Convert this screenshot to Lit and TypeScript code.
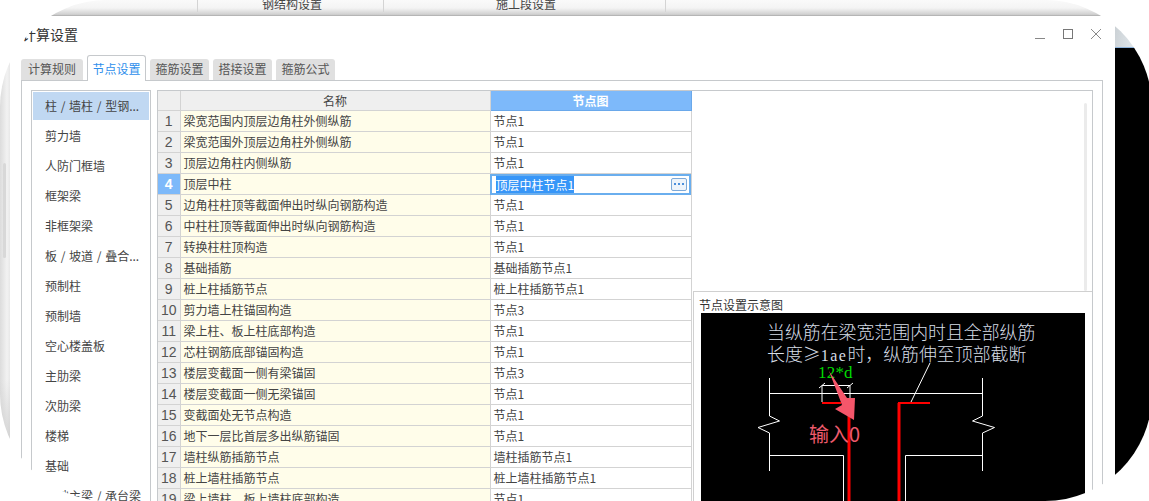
import { LitElement, html, css, svg } from "lit";
import { customElement } from "lit/decorators.js";

const menu = ["柱 / 墙柱 / 型钢...", "剪力墙", "人防门框墙", "框架梁", "非框架梁", "板 / 坡道 / 叠合...", "预制柱", "预制墙", "空心楼盖板", "主肋梁", "次肋梁", "楼梯", "基础", "基础主梁 / 承台梁"];
const rows: [string, string][] = [
  ["梁宽范围内顶层边角柱外侧纵筋", "节点1"],
  ["梁宽范围外顶层边角柱外侧纵筋", "节点1"],
  ["顶层边角柱内侧纵筋", "节点1"],
  ["顶层中柱", "顶层中柱节点1"],
  ["边角柱柱顶等截面伸出时纵向钢筋构造", "节点1"],
  ["中柱柱顶等截面伸出时纵向钢筋构造", "节点1"],
  ["转换柱柱顶构造", "节点1"],
  ["基础插筋", "基础插筋节点1"],
  ["桩上柱插筋节点", "桩上柱插筋节点1"],
  ["剪力墙上柱锚固构造", "节点3"],
  ["梁上柱、板上柱底部构造", "节点1"],
  ["芯柱钢筋底部锚固构造", "节点1"],
  ["楼层变截面一侧有梁锚固", "节点3"],
  ["楼层变截面一侧无梁锚固", "节点1"],
  ["变截面处无节点构造", "节点1"],
  ["地下一层比首层多出纵筋锚固", "节点1"],
  ["墙柱纵筋插筋节点", "墙柱插筋节点1"],
  ["桩上墙柱插筋节点", "桩上墙柱插筋节点1"],
  ["梁上墙柱、板上墙柱底部构造", "节点1"],
];
const tabs = ["计算规则", "节点设置", "箍筋设置", "搭接设置", "箍筋公式"];

@customElement("app-root")
export class AppRoot extends LitElement {
  static styles = css`
    :host { display: block; width: 1149px; height: 501px; font-family: "Noto Sans CJK SC", "Noto Sans", sans-serif; font-size: 12px; color: #333; }
    .stage { position: relative; width: 1149px; height: 501px; overflow: hidden; background: #fff; display: grid; grid-template-columns: 10px 1105px 1fr; grid-template-rows: 16px 1fr; }
    .topbar { grid-column: 1 / 4; display: grid; grid-template-columns: 198px 186px 282px 1fr; background: linear-gradient(#fafafa, #f4f4f4 50%, #d0d0d0 90%, #a9a9a9); height: 16px; overflow: hidden; }
    .topcell { border-right: 1px solid #d4d4d4; height: 12px; text-align: center; line-height: 12px; color: #444; }
    .topcell span { display: block; margin-top: -2px; padding-left: 3px; font-size: 12px; }
    .leftbg { background: linear-gradient(transparent 75%, #cfcfcf 90%), linear-gradient(90deg, #dcdcdc, #f2f2f2 70%, #e8e8e8); padding: 147px 0 0 3px; box-sizing: border-box; }
    .sb { width: 3px; height: 95px; border-radius: 2px; background: #d8d8d8; }
    .rightbg { display: flex; flex-direction: column; }
    .rightbg .g { height: 31px; background: linear-gradient(100deg, #c9cfd3, #e4eaee 70%); border-bottom: 1px solid #8fb4dc; }
    .rightbg .k { flex: 1; background: #000; }
    .dialog { background: #fff; display: flex; flex-direction: column; min-height: 0; overflow: hidden; }
    .head { height: 39px; flex: none; display: flex; align-items: flex-start; padding: 9px 14px 0 12px; box-sizing: border-box; font-size: 14px; color: #333; line-height: 18px; }
    .title { flex: 1; }
    .ctl { display: flex; gap: 18px; padding-top: 4px; }
    .ctl svg { display: block; width: 10px; height: 11px; }
    .tabs { height: 26px; flex: none; display: flex; gap: 4px; align-items: flex-end; padding-left: 11px; margin-bottom: -1px; position: relative; z-index: 1; }
    .tab { width: 59px; height: 21px; margin-bottom: 1px; background: #e0e0e0; border-radius: 3px 3px 0 0; text-align: center; line-height: 20px; color: #555; font-size: 12px; box-sizing: border-box; }
    .tab:first-child { width: 62px; }
    .tab.on { height: 26px; margin-bottom: 0; background: #fff; color: #2f8fec; border: 1px solid #c6c9cc; border-bottom: none; line-height: 25px; }
    .pane { flex: 1; margin: 0 12px 0 11px; border: 1px solid #c6c9cc; border-bottom: none; padding: 9px 9px 0 9px; display: flex; min-height: 0; overflow: hidden; }
    .list { width: 120px; flex: none; border: 1px solid #c6c9cc; border-bottom: none; box-sizing: border-box; padding: 1px; margin-right: 6px; overflow: hidden; }
    .item { height: 30px; padding-left: 12px; line-height: 30px; white-space: nowrap; word-spacing: 1px; color: #444; box-sizing: border-box; }
    .item.on { background: #c0d8f2; height: 28px; line-height: 28px; margin-bottom: 1px; }
    .main { flex: 1; min-width: 0; display: flex; border-top: 1px solid #c6c9cc; border-right: 1px solid #c6c9cc; }
    table { border-collapse: collapse; table-layout: fixed; width: 533px; }
    .tw { width: 535px; flex: none; overflow: hidden; border-left: 1px solid #c6c9cc; box-sizing: border-box; }
    td, th { height: 20px; padding: 0; border: 1px solid #d3d3d3; box-sizing: content-box; font-weight: normal; font-size: 12px; line-height: 20px; white-space: nowrap; overflow: hidden; color: #444; }
    tr > :first-child { border-left: none; }
    tr:first-child > * { border-top: none; }
    th { background: #efefef; height: 19px; line-height: 19px; }
    th.sel { background: #7db9fa; color: #fff; font-weight: bold; border-color: #6aa8ea; }
    td.n { background: #efefef; text-align: center; font-size: 14px; color: #555; font-family: "Liberation Sans", sans-serif; }
    td.n.sel { background: #7db9fa; color: #fff; font-weight: bold; }
    td.c { background: #fffdea; padding-left: 3px; }
    td.v { padding-left: 3px; background: #fff; }
    td.edit { outline: 2px solid #6aaeee; outline-offset: -2px; position: relative; padding-left: 5px; }
    .cellrow { display: flex; align-items: center; justify-content: space-between; padding-right: 4px; }
    .pick { background: #3796f8; color: #fff; line-height: 17px; display: block; }
    .more { width: 14px; height: 11px; border: 1px solid #7da9d8; border-radius: 2px; background: #eef4fb; display: flex; gap: 2px; align-items: center; justify-content: center; }
    .more i { width: 2px; height: 2px; background: #4b8fdc; display: block; }
    .side { flex: 1; min-width: 0; display: flex; flex-direction: column; padding-left: 1px; }
    .up { height: 200px; flex: none; display: flex; justify-content: flex-end; padding: 12px 5px 0 0; box-sizing: border-box; }
    .bar { width: 3px; background: #ebebeb; border-radius: 2px; }
    .pic { flex: 1; min-height: 0; border-top: 1px solid #d0d0d0; border-left: 1px solid #d0d0d0; padding: 4px 6px 0 7px; display: flex; flex-direction: column; overflow: hidden; }
    .cap { height: 17px; flex: none; line-height: 17px; font-size: 12px; margin-left: -2px; color: #333; }
    .pic svg { display: block; width: 384px; height: 190px; flex: none; background: #000; }
    .mask { position: absolute; left: 0; top: 0; width: 1152px; height: 501px; border-radius: 107px; box-shadow: 0 0 0 200px #fff; pointer-events: none; z-index: 5; }
    .t1 { font-family: "Noto Sans CJK SC", sans-serif; font-size: 17.9px; fill: #d6dde6; font-weight: 300; }
    .lat { font-family: "Liberation Serif", serif; font-size: 16px; letter-spacing: 1.5px; }
    .t2 { font-family: "Liberation Serif", serif; font-size: 17px; letter-spacing: .2px; fill: #00dc00; }
    .t3 { font-family: "Noto Sans CJK SC", sans-serif; font-size: 20px; fill: #ee5a6c; }
  `;

  private diagram() {
    // image origin: x=701, y=313
    const ox = 701, oy = 313;
    const L = (x1: number, y1: number, x2: number, y2: number, c = "#fff", w = 1) =>
      svg`<line x1=${x1 - ox} y1=${y1 - oy} x2=${x2 - ox} y2=${y2 - oy} stroke=${c} stroke-width=${w} />`;
    const P = (pts: number[][]) => svg`<polyline fill="none" stroke="#fff" stroke-width="1" points=${pts.map((p) => `${p[0] - ox},${p[1] - oy}`).join(" ")} />`;
    return html`<svg viewBox="0 0 384 190" xmlns="http://www.w3.org/2000/svg">
      <text class="t1" x="66" y="26">当纵筋在梁宽范围内时且全部纵筋</text>
      <text class="t1" x="66" y="48">长度≥<tspan class="lat">1ae</tspan>时，纵筋伸至顶部截断</text>
      ${P([[769.5, 378], [769.5, 416], [779.5, 421], [758, 427.5], [769.5, 433], [769.5, 471]])}
      ${P([[982.5, 378], [982.5, 416], [972.5, 421], [994.5, 427.5], [982.5, 433], [982.5, 471]])}
      ${L(770, 393.5, 982, 393.5)}
      ${P([[770, 455.5], [843.5, 455.5], [843.5, 503]])}
      ${P([[982, 455.5], [905.5, 455.5], [905.5, 503]])}
      ${P([[822, 402], [822, 385.5], [850, 385.5], [850, 402]])}
      ${L(819, 388, 825, 383)} ${L(847, 388, 853, 383)}
      ${L(911, 402, 930, 363)}
      ${L(822, 403, 841, 403, "#ff0000", 2)}
      ${L(849, 412, 849, 503, "#ff0000", 3)}
      ${L(899, 403, 899, 503, "#ff0000", 3)}
      ${L(898, 403, 930, 403, "#ff0000", 2)}
      <text class="t2" x="117" y="65">12*d</text>
      <polygon fill="#f5566a" points="128,58 146,85 154,85 153,107 134,96 141,92" />
      <text class="t3" x="108" y="129">输入0</text>
    </svg>`;
  }

  render() {
    return html`<div class="stage">
      <div class="topbar">
        <div class="topcell"></div>
        <div class="topcell"><span>钢结构设置</span></div>
        <div class="topcell"><span>施工段设置</span></div>
        <div></div>
      </div>
      <div class="leftbg"><div class="sb"></div></div>
      <div class="dialog">
        <div class="head">
          <div class="title">计算设置</div>
          <div class="ctl">
            <svg viewBox="0 0 10 11"><line x1="0" y1="9.5" x2="10" y2="9.5" stroke="#888" /></svg>
            <svg viewBox="0 0 10 11"><rect x=".5" y=".5" width="9" height="9" fill="none" stroke="#777" /></svg>
            <svg viewBox="0 0 10 11"><path d="M0 0L10 10M10 0L0 10" fill="none" stroke="#8a8a8a" /></svg>
          </div>
        </div>
        <div class="tabs">
          ${tabs.map((t, i) => html`<div class="tab ${i === 1 ? "on" : ""}">${t}</div>`)}
        </div>
        <div class="pane">
          <div class="list">
            ${menu.map((m, i) => html`<div class="item ${i === 0 ? "on" : ""}">${m}</div>`)}
          </div>
          <div class="main">
            <div class="tw">
              <table>
                <colgroup><col style="width:22px" /><col style="width:310px" /><col style="width:201px" /></colgroup>
                <tr><th></th><th>名称</th><th class="sel">节点图</th></tr>
                ${rows.map((r, i) => html`<tr>
                  <td class="n ${i === 3 ? "sel" : ""}">${i + 1}</td>
                  <td class="c">${r[0]}</td>
                  ${i === 3
                    ? html`<td class="v edit"><div class="cellrow"><span class="pick">${r[1]}</span><span class="more"><i></i><i></i><i></i></span></div></td>`
                    : html`<td class="v">${r[1]}</td>`}
                </tr>`)}
              </table>
            </div>
            <div class="side">
              <div class="up"><div class="bar"></div></div>
              <div class="pic">
                <div class="cap">节点设置示意图</div>
                ${this.diagram()}
              </div>
            </div>
          </div>
        </div>
      </div>
      <div class="rightbg"><div class="g"></div><div class="k"></div></div>
      <div class="mask"></div>
    </div>`;
  }
}
